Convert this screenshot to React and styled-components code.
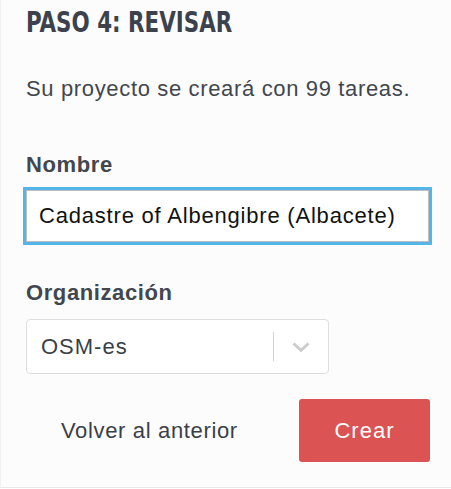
import React, { useState } from "react";
import styled, { createGlobalStyle } from "styled-components";

const GlobalStyle = createGlobalStyle`
  html, body {
    margin: 0;
    padding: 0;
    background: #ffffff;
  }
  body {
    font-family: "Liberation Sans", Arial, sans-serif;
    color: #41464f;
  }
  * { box-sizing: border-box; }
`;

const Panel = styled.div`
  width: 451px;
  height: 488px;
  background: #fcfcfc;
  border-bottom: 1px solid #e9e9e9;
  border-left: 1px solid #f1f1f1;
  padding: 7px 0 0 24px;
  display: flex;
  flex-direction: column;
  align-items: flex-start;
`;

const Title = styled.h2`
  margin: 0 0 0 1px;
  font-family: "DejaVu Sans Condensed", "DejaVu Sans", sans-serif;
  font-stretch: condensed;
  font-weight: 700;
  font-size: 28px;
  line-height: 32px;
  color: #3c424d;
  text-transform: uppercase;
  white-space: nowrap;
  transform: scaleX(0.85);
  transform-origin: left center;
`;

const Lead = styled.p`
  margin: 36px 0 0 1px;
  font-size: 22px;
  line-height: 28px;
  letter-spacing: 0.65px;
  color: #41464f;
`;

const Label = styled.label`
  display: block;
  margin: ${(p) => p.$gap}px 0 0 1px;
  font-size: 22px;
  font-weight: 700;
  line-height: 28px;
  letter-spacing: 0.6px;
  color: #41464f;
`;

const TextInput = styled.input`
  display: block;
  width: 403px;
  height: 52px;
  margin: 11px 0 0 1px;
  padding: 0 12px;
  font-family: "Liberation Sans", Arial, sans-serif;
  font-size: 22px;
  letter-spacing: 0.8px;
  color: #111;
  background: #fff;
  border: 1px solid #bdbdbd;
  box-shadow: 0 0 0 3px #55b4e8;
  outline: none;
  caret-color: #111;
`;

const SelectBox = styled.div`
  display: flex;
  align-items: center;
  width: 303px;
  height: 55px;
  margin: 12px 0 0 1px;
  background: #fff;
  border: 1px solid #dedede;
  border-radius: 4px;
`;

const SelectValue = styled.span`
  flex: 1;
  padding-left: 14px;
  font-size: 22px;
  letter-spacing: 1px;
  color: #3a3f48;
`;

const Separator = styled.span`
  width: 1px;
  height: 29px;
  background: #d3d3d3;
`;

const Chevron = styled.span`
  display: flex;
  align-items: center;
  justify-content: center;
  width: 54px;
  color: #cccccc;
`;

const Actions = styled.div`
  display: flex;
  align-items: center;
  justify-content: space-between;
  margin: 25px 0 0 1px;
  padding-left: 35px;
  width: 404px;
`;

const LinkButton = styled.button`
  background: none;
  border: 0;
  padding: 0;
  font-family: "Liberation Sans", Arial, sans-serif;
  font-size: 22px;
  line-height: 28px;
  letter-spacing: 0.65px;
  color: #3a3f48;
  cursor: pointer;
`;

const PrimaryButton = styled.button`
  width: 131px;
  height: 63px;
  border: 0;
  border-radius: 3px;
  background: #db5353;
  color: #fff;
  font-family: "Liberation Sans", Arial, sans-serif;
  font-size: 22px;
  line-height: 28px;
  letter-spacing: 1px;
  cursor: pointer;
`;

export default function App() {
  const [name, setName] = useState("Cadastre of Albengibre (Albacete)");
  return (
    <>
      <GlobalStyle />
      <Panel>
        <Title>Paso 4: Revisar</Title>
        <Lead>Su proyecto se creará con 99 tareas.</Lead>
        <Label htmlFor="name" $gap={48}>
          Nombre
        </Label>
        <TextInput
          id="name"
          value={name}
          onChange={(e) => setName(e.target.value)}
        />
        <Label $gap={37}>Organización</Label>
        <SelectBox>
          <SelectValue>OSM-es</SelectValue>
          <Separator />
          <Chevron>
            <svg width="18" height="10" viewBox="0 0 18 10">
              <path
                d="M1.5 1.5 L9 8.3 L16.5 1.5"
                fill="none"
                stroke="currentColor"
                strokeWidth="3"
              />
            </svg>
          </Chevron>
        </SelectBox>
        <Actions>
          <LinkButton>Volver al anterior</LinkButton>
          <PrimaryButton>Crear</PrimaryButton>
        </Actions>
      </Panel>
    </>
  );
}
